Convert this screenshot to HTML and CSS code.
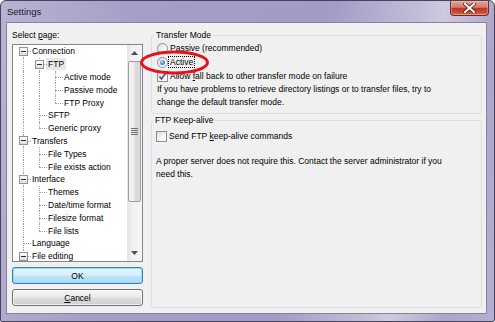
FILE: index.html
```html
<!DOCTYPE html>
<html lang="en">
<head>
    <meta charset="UTF-8">
    <meta name="viewport" content="width=device-width, initial-scale=1.0">
    <title>Settings</title>
    <link rel="stylesheet" href="styles.css">
</head>
<body>

    <div class="window">
        <div class="titlebar">
            <span class="title">Settings</span>
            <span class="close-btn">
                <svg width="13" height="10" viewBox="0 0 13 10">
                    <path d="M2 1 L11 9 M11 1 L2 9" stroke="#5a1d16" stroke-width="3.6" stroke-linecap="square"/>
                    <path d="M2 1 L11 9 M11 1 L2 9" stroke="#ffffff" stroke-width="2" stroke-linecap="square"/>
                </svg>
            </span>
        </div>

        <div class="client">
            <div class="sidebar">
                <div class="page-label">Select <u>p</u>age:</div>

                <div class="tree">
                    <ul class="tree-items">
                        <li class="row"><span class="node first"><span class="expander"></span></span><span class="label">Connection</span></li>
                        <li class="row"><span class="pipe"></span><span class="node"><span class="expander"></span></span><span class="label selected">FTP</span></li>
                        <li class="row"><span class="pipe"></span><span class="pipe"></span><span class="node"></span><span class="label">Active mode</span></li>
                        <li class="row"><span class="pipe"></span><span class="pipe"></span><span class="node"></span><span class="label">Passive mode</span></li>
                        <li class="row"><span class="pipe"></span><span class="pipe"></span><span class="node last"></span><span class="label">FTP Proxy</span></li>
                        <li class="row"><span class="pipe"></span><span class="node"></span><span class="label">SFTP</span></li>
                        <li class="row"><span class="pipe"></span><span class="node last"></span><span class="label">Generic proxy</span></li>
                        <li class="row"><span class="node"><span class="expander"></span></span><span class="label">Transfers</span></li>
                        <li class="row"><span class="pipe"></span><span class="node"></span><span class="label">File Types</span></li>
                        <li class="row"><span class="pipe"></span><span class="node last"></span><span class="label">File exists action</span></li>
                        <li class="row"><span class="node"><span class="expander"></span></span><span class="label">Interface</span></li>
                        <li class="row"><span class="pipe"></span><span class="node"></span><span class="label">Themes</span></li>
                        <li class="row"><span class="pipe"></span><span class="node"></span><span class="label">Date/time format</span></li>
                        <li class="row"><span class="pipe"></span><span class="node"></span><span class="label">Filesize format</span></li>
                        <li class="row"><span class="pipe"></span><span class="node last"></span><span class="label">File lists</span></li>
                        <li class="row"><span class="node"></span><span class="label">Language</span></li>
                        <li class="row"><span class="node"><span class="expander"></span></span><span class="label">File editing</span></li>
                    </ul>

                    <div class="scrollbar">
                        <div class="sb-btn">
                            <svg width="7" height="4" viewBox="0 0 7 4"><path d="M0 4 L3.5 0 L7 4 Z" fill="#4d4d4d"/></svg>
                        </div>
                        <div class="sb-thumb">
                            <svg width="7" height="7" viewBox="0 0 7 7">
                                <path d="M0 0.5 H7 M0 2.5 H7 M0 4.5 H7 M0 6.5 H7" stroke="#6f6f6f" stroke-width="1"/>
                            </svg>
                        </div>
                        <div class="sb-track"></div>
                        <div class="sb-btn">
                            <svg width="7" height="4" viewBox="0 0 7 4"><path d="M0 0 L7 0 L3.5 4 Z" fill="#4d4d4d"/></svg>
                        </div>
                    </div>
                </div>

                <button class="btn btn-default">OK</button>
                <button class="btn"><u>C</u>ancel</button>
            </div>

            <div class="panel">
                <fieldset class="group">
                    <legend>Transfer Mode</legend>
                    <label class="option"><span class="radio"></span><span>Passive (recommended)</span></label>
                    <label class="option"><span class="radio checked"></span><span class="focused">Active</span></label>
                    <label class="option"><span class="checkbox checked">
                        <svg width="9" height="9" viewBox="0 0 9 9"><path d="M1.5 4.5 L3.5 7 L7.5 1.5" fill="none" stroke="#3c4f8c" stroke-width="1.6"/></svg>
                    </span><span>Allow <u>f</u>all back to other transfer mode on failure</span></label>
                    <p class="note">If you have problems to retrieve directory listings or to transfer files, try to<br>change the default transfer mode.</p>
                </fieldset>

                <fieldset class="group group-fill">
                    <legend>FTP Keep-alive</legend>
                    <label class="option option-spaced"><span class="checkbox"></span><span>Send FTP <u>k</u>eep-alive commands</span></label>
                    <p class="note note-spaced">A proper server does not require this. Contact the server administrator if you<br>need this.</p>
                </fieldset>
            </div>
        </div>

        <svg class="annotation" width="72" height="27" viewBox="0 0 72 27">
            <ellipse cx="35.5" cy="13.5" rx="33" ry="10.5" fill="none" stroke="#e5141c" stroke-width="3"/>
        </svg>
    </div>

</body>
</html>
```

FILE: styles.css
```css
body {
    margin: 0;
    font-family: "Liberation Sans", Arial, sans-serif;
    font-size: 8.5px;
    color: #000;
}
.window {
    position: relative;
    width: 495px;
    height: 322px;
    box-sizing: border-box;
    display: flex;
    flex-direction: column;
    padding: 0 7px 7px 5px;
    border: 1px solid #46445a;
    border-radius: 6px 6px 2px 2px;
    background: linear-gradient(100deg, #b8b2d3 0%, #a69ec7 25%, #a39ac5 60%, #c2bcd8 76%, #cfcae0 81%, #aca4ca 91%, #b6afd1 100%);
}
.titlebar {
    height: 21px;
    display: flex;
    align-items: flex-start;
}
.title {
    margin: 5px 0 0 1px;
    font-size: 9.5px;
    line-height: 12px;
    color: #1b1b24;
}
.close-btn {
    margin-left: auto;
    margin-right: -2px;
    width: 39px;
    height: 15px;
    box-sizing: border-box;
    display: flex;
    align-items: center;
    justify-content: center;
    border: 1px solid #6a2c27;
    border-top: none;
    border-radius: 0 0 4px 4px;
    background: linear-gradient(#e4a496 0%, #d27a6a 45%, #bd3522 52%, #c9503a 85%, #d87a5f 100%);
    box-shadow: inset 0 0 0 1px rgba(255, 220, 210, 0.35);
}
.client {
    flex: 1;
    display: flex;
    padding: 6px 4px 5px 5px;
    border: 1px solid #86839a;
    background-color: #f0f0f0;
}

/* left side: page tree and buttons */
.sidebar {
    width: 131px;
    display: flex;
    flex-direction: column;
}
.page-label {
    line-height: 13px;
    margin-bottom: 2px;
}
.tree {
    height: 218px;
    box-sizing: border-box;
    display: flex;
    border: 1px solid #828790;
    background-color: #fff;
}
.tree-items {
    flex: 1;
    list-style-type: none;
    margin: 0;
    padding: 0 0 0 2px;
    overflow: hidden;
}
.row {
    display: flex;
    align-items: center;
    height: 12.8px;
    white-space: nowrap;
}
.pipe,
.node {
    position: relative;
    flex: none;
    width: 16px;
    height: 100%;
}
.pipe::before,
.node::before {
    content: "";
    position: absolute;
    left: 8px;
    top: 0;
    bottom: 0;
    border-left: 1px dotted #a3a3a3;
}
.node.first::before {
    top: 50%;
}
.node.last::before {
    bottom: 50%;
}
.node::after {
    content: "";
    position: absolute;
    left: 8px;
    right: 0;
    top: 50%;
    border-top: 1px dotted #a3a3a3;
}
.expander {
    position: absolute;
    z-index: 1;
    left: 4px;
    top: 50%;
    margin-top: -4.5px;
    width: 9px;
    height: 9px;
    box-sizing: border-box;
    border: 1px solid #919191;
    background: linear-gradient(#ffffff, #dcdcdc);
}
.expander::after {
    content: "";
    position: absolute;
    left: 1px;
    right: 1px;
    top: 3px;
    height: 1px;
    background-color: #2e2e2e;
}
.label {
    padding-left: 1px;
    line-height: 12px;
}
.label.selected {
    margin-left: -1px;
    padding: 0 2px;
    background-color: #e8e8e8;
}
.scrollbar {
    width: 15px;
    display: flex;
    flex-direction: column;
    background: linear-gradient(to right, #e2e2e2, #f2f2f2 35%, #f4f4f4);
}
.sb-btn {
    height: 16px;
    display: flex;
    align-items: center;
    justify-content: center;
}
.sb-thumb {
    height: 141px;
    margin: 0 1px;
    box-sizing: border-box;
    display: flex;
    align-items: center;
    justify-content: center;
    border: 1px solid #9b9b9b;
    border-radius: 2px;
    background: linear-gradient(to right, #f6f6f6, #e9e9e9 50%, #d6d6d6 52%, #dedede);
}
.sb-track {
    flex: 1;
}
.btn {
    margin-top: 5px;
    height: 17px;
    width: 100%;
    padding: 0;
    font: inherit;
    color: #000;
    border: 1px solid #707070;
    border-radius: 3px;
    background: linear-gradient(#f3f3f3 0%, #ebebeb 48%, #dcdcdc 52%, #cfcfcf 100%);
    box-shadow: inset 0 0 0 1px rgba(255, 255, 255, 0.7);
}
.btn-default {
    border-color: #3c7fb1;
    background: linear-gradient(#eaf6fd 0%, #d9f0fc 48%, #bee6fd 52%, #a7d9f5 100%);
    box-shadow: inset 0 0 0 1px #9fd7f4;
}

/* right side: option groups */
.panel {
    flex: 1;
    margin-left: 8px;
    display: flex;
    flex-direction: column;
}
.group {
    margin: 0;
    padding: 0 4px 4px 5px;
    border: 1px solid #d5dfe5;
    border-radius: 3px;
}
.group legend {
    margin-left: -3px;
    padding: 0 2px;
    line-height: 12px;
}
.group-fill {
    flex: 1;
    padding-left: 4px;
}
.option {
    display: flex;
    align-items: center;
    height: 14px;
    white-space: nowrap;
}
.option-spaced {
    margin-top: 3px;
}
.radio,
.checkbox {
    position: relative;
    flex: none;
    width: 11px;
    height: 11px;
    box-sizing: border-box;
    margin-right: 2px;
    border: 1px solid #8e8f8f;
    background: linear-gradient(135deg, #dcdcdc, #f6f6f6 60%, #ffffff);
}
.radio {
    border-radius: 50%;
}
.radio.checked::after {
    content: "";
    position: absolute;
    left: 2px;
    top: 2px;
    width: 5px;
    height: 5px;
    border-radius: 50%;
    background: radial-gradient(circle at 40% 35%, #bfe4fb, #3a8bd0 55%, #1a4f8c);
}
.checkbox {
    display: flex;
    align-items: center;
    justify-content: center;
}
.focused {
    outline: 1px dotted #000;
    outline-offset: 0;
    padding: 0 1px;
    margin-left: -1px;
}
.note {
    margin: 0;
    line-height: 13px;
}
.note-spaced {
    margin-top: 12px;
}
.annotation {
    position: absolute;
    left: 138px;
    top: 48px;
}
```
